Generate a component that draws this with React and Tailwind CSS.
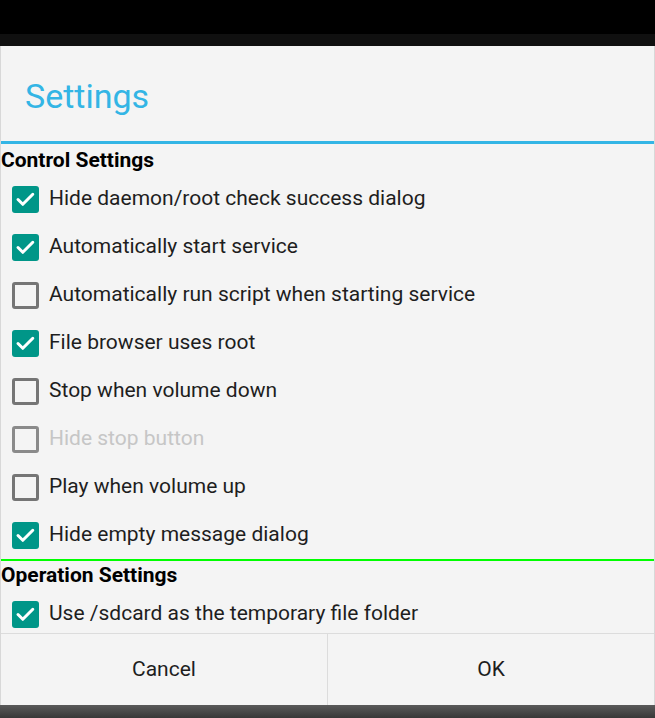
import { useState } from 'react';

const CONTROL = [
  { label: 'Hide daemon/root check success dialog', checked: true },
  { label: 'Automatically start service', checked: true },
  { label: 'Automatically run script when starting service', checked: false },
  { label: 'File browser uses root', checked: true },
  { label: 'Stop when volume down', checked: false },
  { label: 'Hide stop button', checked: false, disabled: true },
  { label: 'Play when volume up', checked: false },
  { label: 'Hide empty message dialog', checked: true },
];

const OPERATION = [{ label: 'Use /sdcard as the temporary file folder', checked: true }];

function Box({ checked, disabled }) {
  if (checked) {
    return (
      <span className="flex h-[27px] w-[27px] shrink-0 items-center justify-center rounded-[3px] bg-[#009688]">
        <svg width="27" height="27" viewBox="0 0 27 27" fill="none">
          <path d="M6 13.5l4.8 4.8 10-10" stroke="#fff" strokeWidth="3" strokeLinecap="round" strokeLinejoin="round" />
        </svg>
      </span>
    );
  }
  return (
    <span
      className={`h-[27px] w-[27px] shrink-0 rounded-[3px] border-[3px] ${
        disabled ? 'border-[#8a8a8a]' : 'border-[#757575]'
      }`}
    />
  );
}

function Row({ item, onToggle }) {
  return (
    <div
      onClick={item.disabled ? undefined : onToggle}
      className="flex h-[48px] shrink-0 items-center gap-[10px] pl-[11px]"
    >
      <Box checked={item.checked} disabled={item.disabled} />
      <span className={`text-[21px] ${item.disabled ? 'text-[#c6c6c6]' : 'text-[#1e1e1e]'}`}>{item.label}</span>
    </div>
  );
}

export default function App() {
  const [control, setControl] = useState(CONTROL);
  const [operation, setOperation] = useState(OPERATION);

  const toggle = (list, setList, i) =>
    setList(list.map((it, j) => (j === i ? { ...it, checked: !it.checked } : it)));

  return (
    <div className="flex h-[718px] w-[655px] flex-col overflow-hidden bg-[#101010] font-['Roboto',sans-serif]">
      {/* status bar */}
      <div className="h-[34px] shrink-0 bg-black" />
      <div className="h-[12px] shrink-0" />

      {/* dialog */}
      <div className="flex h-[659px] shrink-0 flex-col border-x border-[#d8d8d8] bg-[#f4f4f4]">
        <div className="flex h-[98px] shrink-0 items-center border-b-[3px] border-[#33b5e5] pl-[24px] pt-[4px]">
          <h1 className="text-[34px] leading-none text-[#33b5e5]">Settings</h1>
        </div>

        <div className="flex h-[489px] shrink-0 flex-col overflow-hidden">
          <div className="flex h-[31px] shrink-0 items-center pt-[3px] text-[21px] font-bold text-black">
            Control Settings
          </div>
          {control.map((item, i) => (
            <Row key={item.label} item={item} onToggle={() => toggle(control, setControl, i)} />
          ))}
          <div className="h-[2px] shrink-0 bg-[#00ff00]" />
          <div className="flex h-[29px] shrink-0 items-center pt-[1px] text-[21px] font-bold text-black">
            Operation Settings
          </div>
          {operation.map((item, i) => (
            <Row key={item.label} item={item} onToggle={() => toggle(operation, setOperation, i)} />
          ))}
        </div>

        <div className="flex flex-1 border-t border-[#dcdcdc]">
          <button className="flex-1 border-r border-[#dcdcdc] text-[21px] text-[#1e1e1e]">Cancel</button>
          <button className="flex-1 text-[21px] text-[#1e1e1e]">OK</button>
        </div>
      </div>

      {/* dimmed background below */}
      <div className="flex-1 bg-gradient-to-b from-[#5a5a5a] to-[#383838]" />
    </div>
  );
}
